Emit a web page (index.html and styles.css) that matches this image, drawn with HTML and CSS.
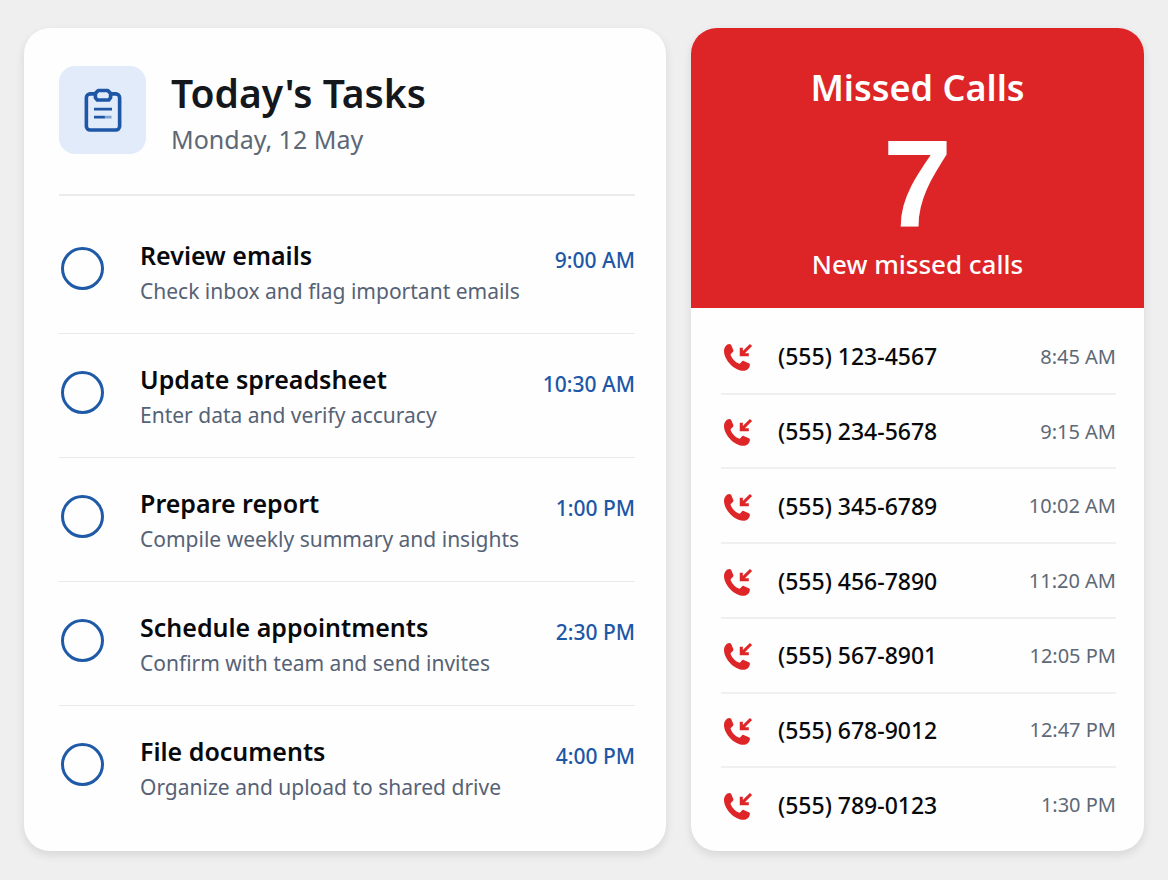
FILE: index.html
```
<!DOCTYPE html>
<html lang="en">
<head>
    <meta charset="UTF-8">
    <meta name="viewport" content="width=device-width, initial-scale=1.0">
    <title>Tasks and Missed Calls</title>
    <link rel="stylesheet" href="styles.css">
</head>
<body>
    <!-- Shared handset icon for the call list -->
    <svg class="sprite" aria-hidden="true">
        <symbol id="missed-call" viewBox="0 0 30 30">
            <path fill="currentColor" d="M2.6 3.2C3.6 1.9 5.2 1 6.7 1.1c.8.1 1.3.5 1.6 1.2l2 4.7c.3.7.1 1.4-.4 1.9L8 10.8c-.4.4-.5.9-.3 1.4 1.6 3.8 4.4 6.9 8.1 8.4.6.3 1.1.2 1.5-.3l1.6-1.9c.5-.6 1.1-.7 1.8-.4l5.1 2.3c.8.4 1.2 1 1.1 1.8-.2 2.7-2.4 5.4-5.4 5.7C11.500 28.300 1.100 17 1 7.900 1 6.100 1.500 4.500 2.600 3.200z"/>
            <path fill="none" stroke="currentColor" stroke-width="3.1" d="M28 2L18.800 11.200M18.300 4.800V11.700H25.800"/>
        </symbol>
    </svg>

    <main class="dashboard">
        <section class="card tasks">
            <header class="tasks-header">
                <div class="tasks-icon">
                    <svg width="38" height="45" viewBox="0 0 40 46" fill="none" stroke="currentColor" stroke-width="3.8" stroke-linejoin="round" aria-hidden="true">
                        <path d="M13 5.500H6.500a4 4 0 0 0-4 4V39.500a4 4 0 0 0 4 4H33.500a4 4 0 0 0 4-4V9.500a4 4 0 0 0-4-4H27"/>
                        <path d="M15 2H25L28 5V9.500L26 12H14L12 9.500V5z"/>
                        <path d="M10.500 21.500H29.500M10.500 30H22" stroke-width="3"/>
                        <path d="M22 30H29" stroke-width="3" opacity=".5"/>
                    </svg>
                </div>
                <div class="tasks-title">
                    <h1>Today's Tasks</h1>
                    <p class="date">Monday, 12 May</p>
                </div>
            </header>

            <ul class="task-list">
                <li>
                    <input type="checkbox" id="task-1">
                    <label for="task-1"><span class="task-name">Review emails</span><span class="task-note">Check inbox and flag important emails</span></label>
                    <time>9:00 AM</time>
                </li>
                <li>
                    <input type="checkbox" id="task-2">
                    <label for="task-2"><span class="task-name">Update spreadsheet</span><span class="task-note">Enter data and verify accuracy</span></label>
                    <time>10:30 AM</time>
                </li>
                <li>
                    <input type="checkbox" id="task-3">
                    <label for="task-3"><span class="task-name">Prepare report</span><span class="task-note">Compile weekly summary and insights</span></label>
                    <time>1:00 PM</time>
                </li>
                <li>
                    <input type="checkbox" id="task-4">
                    <label for="task-4"><span class="task-name">Schedule appointments</span><span class="task-note">Confirm with team and send invites</span></label>
                    <time>2:30 PM</time>
                </li>
                <li>
                    <input type="checkbox" id="task-5">
                    <label for="task-5"><span class="task-name">File documents</span><span class="task-note">Organize and upload to shared drive</span></label>
                    <time>4:00 PM</time>
                </li>
            </ul>
        </section>

        <section class="card calls">
            <header class="calls-header">
                <h2>Missed Calls</h2>
                <p class="count">7</p>
                <p class="count-label">New missed calls</p>
            </header>

            <ul class="call-list">
                <li><svg class="call-icon" aria-hidden="true"><use href="#missed-call"/></svg><span class="number">(555) 123-4567</span><time>8:45 AM</time></li>
                <li><svg class="call-icon" aria-hidden="true"><use href="#missed-call"/></svg><span class="number">(555) 234-5678</span><time>9:15 AM</time></li>
                <li><svg class="call-icon" aria-hidden="true"><use href="#missed-call"/></svg><span class="number">(555) 345-6789</span><time>10:02 AM</time></li>
                <li><svg class="call-icon" aria-hidden="true"><use href="#missed-call"/></svg><span class="number">(555) 456-7890</span><time>11:20 AM</time></li>
                <li><svg class="call-icon" aria-hidden="true"><use href="#missed-call"/></svg><span class="number">(555) 567-8901</span><time>12:05 PM</time></li>
                <li><svg class="call-icon" aria-hidden="true"><use href="#missed-call"/></svg><span class="number">(555) 678-9012</span><time>12:47 PM</time></li>
                <li><svg class="call-icon" aria-hidden="true"><use href="#missed-call"/></svg><span class="number">(555) 789-0123</span><time>1:30 PM</time></li>
            </ul>
        </section>
    </main>
</body>
</html>
```
FILE: styles.css
```
* {
    box-sizing: border-box;
}

body {
    margin: 0;
    background-color: #efefef;
    font-family: 'Noto Sans', 'Open Sans', sans-serif;
    color: #08090c;
}

h1, h2, p, ul {
    margin: 0;
    padding: 0;
}

ul {
    list-style: none;
}

.sprite {
    display: none;
}

.dashboard {
    display: grid;
    grid-template-columns: 642fr 453fr;
    gap: 25px;
    min-height: 100vh;
    padding: 28px 24px 29px;
}

.card {
    display: flex;
    flex-direction: column;
    background: #fefefe;
    border-radius: 26px;
    box-shadow: 0 4px 10px rgba(0, 0, 0, 0.1);
    overflow: hidden;
}

.tasks {
    padding: 38px 31px 22px 35px;
}

.tasks-header {
    display: flex;
    align-items: flex-start;
    gap: 25px;
    padding-bottom: 36px;
    border-bottom: 2px solid #ebecee;
}

.tasks-icon {
    display: flex;
    align-items: center;
    justify-content: center;
    width: 87px;
    height: 88px;
    border-radius: 16px;
    background: #e2ebf9;
    color: #1d57a6;
}

h1 {
    font-size: 39px;
    font-weight: 600;
    line-height: 54px;
    color: #14171c;
}

.date {
    font-size: 25px;
    line-height: 38px;
    color: #5d6877;
}

.task-list {
    display: flex;
    flex: 1;
    flex-direction: column;
    padding-top: 14px;
}

.task-list li {
    display: flex;
    flex: 1;
    align-items: flex-start;
    padding-top: 27px;
}

.task-list li + li {
    border-top: 1px solid #e8e9eb;
}

.task-list input {
    appearance: none;
    flex: none;
    width: 43px;
    height: 43px;
    margin: 10px 36px 0 2px;
    border: 3px solid #1f5aa8;
    border-radius: 50%;
    cursor: pointer;
}

.task-list input:checked {
    background: #1f5aa8;
}

.task-list label {
    flex: 1;
}

.task-name, .task-note {
    display: block;
    line-height: 36px;
    white-space: nowrap;
}

.task-name {
    font-size: 25px;
    font-weight: 600;
}

.task-note {
    font-size: 21px;
    color: #566275;
}

.task-list time {
    font-size: 21px;
    font-weight: 500;
    line-height: 46px;
    color: #1d57a6;
}

.calls-header {
    padding: 34px 20px 26px;
    background: #dd2527;
    color: #fff;
    text-align: center;
}

h2 {
    font-size: 36px;
    font-weight: 600;
    line-height: 52px;
}

.count {
    margin-top: 8px;
    font-family: 'Liberation Sans', sans-serif;
    font-size: 124px;
    font-weight: 700;
    line-height: 124px;
}

.count-label {
    font-size: 26px;
    font-weight: 500;
    line-height: 36px;
}

.call-list {
    display: flex;
    flex: 1;
    flex-direction: column;
    padding: 12px 28px 10px 30px;
}

.call-list li {
    display: flex;
    flex: 1;
    align-items: center;
}

.call-list li + li {
    border-top: 2px solid #eff0f1;
}

.call-icon {
    width: 30px;
    height: 30px;
    margin: 4px 25px 0 2px;
    color: #de2628;
}

.number {
    flex: 1;
    font-size: 23px;
    font-weight: 500;
}

.call-list time {
    font-size: 20px;
    color: #5d6877;
}

@media (max-width: 900px) {
    .dashboard {
        grid-template-columns: 1fr;
    }

    .task-name, .task-note {
        white-space: normal;
    }
}
```
